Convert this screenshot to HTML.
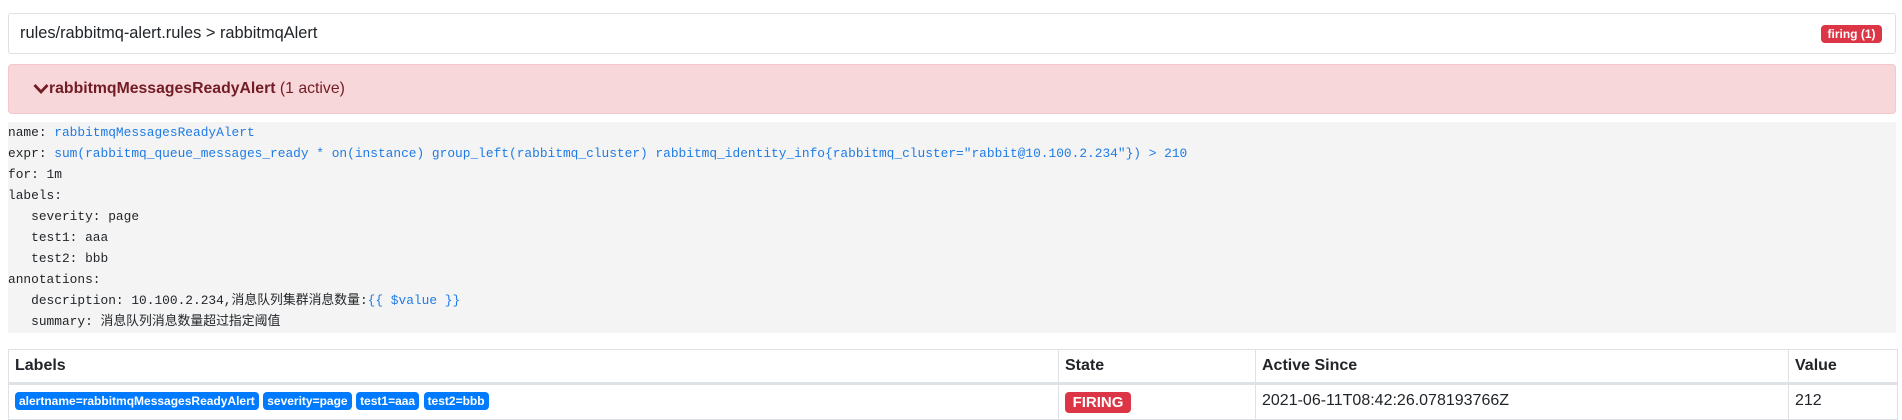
<!DOCTYPE html>
<html><head><meta charset="utf-8"><style>
*{box-sizing:border-box;margin:0;padding:0}
body{width:1902px;height:414px;overflow:hidden;background:#fff;font-family:"Segoe UI","Liberation Sans","Noto Sans CJK SC",sans-serif;font-size:16px;color:#212529}
.hdr{position:absolute;left:8px;top:13px;width:1888px;height:41px;border:1px solid #e0e0e0;border-radius:3px}
.hdr .t{position:absolute;left:11px;top:10px;font-size:16.4px}
.fb{position:absolute;left:1812px;top:11px;width:61px;height:18px;background:#dc3545;color:#fff;border-radius:4px;font-size:12px;font-weight:bold;text-align:center;line-height:18px}
.pink{position:absolute;left:8px;top:64px;width:1888px;height:50px;background:#f8d7da;border:1px solid #f5c6cb;border-radius:4px;color:#721c24}
.pink .t{position:absolute;left:40px;top:15px;font-size:15.8px}
.pink svg{position:absolute;left:24px;top:18px}
pre{position:absolute;left:8px;top:122px;width:1888px;height:211px;background:#f4f4f4;font-family:"Liberation Mono","Noto Sans CJK SC",monospace;font-size:12.85px;line-height:21px;color:#212529}
.b{color:#1e7be6}
table{position:absolute;left:8px;top:349px;width:1890px;border-collapse:collapse}
th,td{border:1px solid #dee2e6;text-align:left;padding:0 6px}
th{height:34px;border-bottom:3px solid #dee2e6;font-weight:bold}
td{height:36px;vertical-align:top;padding-top:7px}
.bl{display:inline-block;background:#007bff;color:#fff;font-size:12px;font-weight:bold;border-radius:4px;padding:0 4px;line-height:18px;margin-right:0}
.fr{display:inline-block;background:#dc3545;color:#fff;font-size:15px;font-weight:bold;border-radius:4px;width:66px;text-align:center;line-height:21px}
</style></head><body>
<div class="hdr"><div class="t">rules/rabbitmq-alert.rules &gt; rabbitmqAlert</div><div class="fb">firing (1)</div></div>
<div class="pink"><svg width="16" height="12" viewBox="0 0 16 12"><path d="M1.5 2 L8 9 L14.5 2" stroke="#721c24" stroke-width="2.8" fill="none"/></svg><div class="t"><b>rabbitmqMessagesReadyAlert</b> (1 active)</div></div>
<pre>name: <span class="b">rabbitmqMessagesReadyAlert</span>
expr: <span class="b">sum(rabbitmq_queue_messages_ready * on(instance) group_left(rabbitmq_cluster) rabbitmq_identity_info{rabbitmq_cluster="rabbit@10.100.2.234"}) &gt; 210</span>
for: 1m
labels:
   severity: page
   test1: aaa
   test2: bbb
annotations:
   description: 10.100.2.234,消息队列集群消息数量:<span class="b">{{ $value }}</span>
   summary: 消息队列消息数量超过指定阈值</pre>
<table><tr><th style="width:1050px">Labels</th><th style="width:197px">State</th><th style="width:533px">Active Since</th><th>Value</th></tr>
<tr><td><span class="bl">alertname=rabbitmqMessagesReadyAlert</span> <span class="bl">severity=page</span> <span class="bl">test1=aaa</span> <span class="bl">test2=bbb</span></td><td><span class="fr">FIRING</span></td><td>2021-06-11T08:42:26.078193766Z</td><td>212</td></tr></table>
</body></html>
